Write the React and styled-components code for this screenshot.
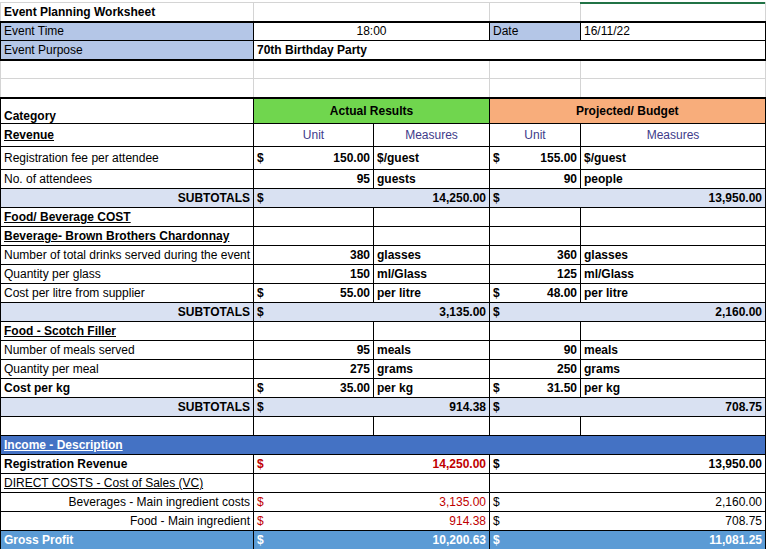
import React from "react";
import styled, { createGlobalStyle } from "styled-components";

const Global = createGlobalStyle`
  html, body { margin: 0; background: #fff; }
  body { font-family: "Liberation Sans", Arial, sans-serif; }
`;

const Sheet = styled.table`
  border-collapse: collapse;
  table-layout: fixed;
  width: 765px;
  font-size: 12px;
  color: #000;
  margin-top: 2px;
`;

const Row = styled.tr`
  height: ${(p) => p.$h || 19}px;
  background: ${(p) => p.$bg || "transparent"};
  color: ${(p) => p.$color || "inherit"};
`;

const Cell = styled.td`
  padding: 0 3px;
  white-space: nowrap;
  overflow: hidden;
  text-align: ${(p) => p.$align || "left"};
  font-weight: ${(p) => (p.$bold ? 700 : 400)};
  text-decoration: ${(p) => (p.$u ? "underline" : "none")};
  background: ${(p) => p.$bg || "transparent"};
  color: ${(p) => p.$color || "inherit"};
  border: 1px solid ${(p) => (p.$grid ? "#d4d4d4" : "#000")};
  border-top-width: ${(p) => (p.$thickTop ? 2 : 1)}px;
  border-bottom-width: ${(p) => (p.$thickBottom ? 2 : 1)}px;
  border-right-width: ${(p) => (p.$thickRight ? 2 : 1)}px;
  max-width: 0;
`;

const Money = styled.div`
  display: flex;
  justify-content: space-between;
  font-weight: ${(p) => (p.$bold ? 700 : 400)};
  color: ${(p) => p.$color || "inherit"};
`;

const SelectBar = styled.div`
  position: absolute;
  left: 580px;
  top: 0;
  width: 185px;
  height: 2px;
  background: #217346;
`;

const HEAD = "#403b8a";
const RED = "#c00000";

const M = ({ v, bold, color }) => (
  <Money $bold={bold} $color={color}>
    <span>$</span>
    <span>{v}</span>
  </Money>
);

const DataRow = ({ label, bold, a, am, b, bm, money }) => (
  <Row>
    <Cell $bold={bold}>{label}</Cell>
    <Cell $align="right" $bold>{money ? <M v={a} bold /> : a}</Cell>
    <Cell $bold>{am}</Cell>
    <Cell $align="right" $bold>{money ? <M v={b} bold /> : b}</Cell>
    <Cell $bold>{bm}</Cell>
  </Row>
);

const Subtotal = ({ a, b }) => (
  <Row $bg="#d9e1f2">
    <Cell $align="right" $bold>SUBTOTALS</Cell>
    <Cell colSpan={2}><M v={a} bold /></Cell>
    <Cell colSpan={2}><M v={b} bold /></Cell>
  </Row>
);

const Section = ({ label }) => (
  <Row>
    <Cell $bold $u>{label}</Cell>
    <Cell /><Cell /><Cell /><Cell />
  </Row>
);

export default function App() {
  return (
    <div style={{ position: "relative" }}>
      <Global />
      <SelectBar />
      <Sheet>
        <colgroup>
          <col style={{ width: 253 }} />
          <col style={{ width: 120 }} />
          <col style={{ width: 116 }} />
          <col style={{ width: 91 }} />
          <col style={{ width: 185 }} />
        </colgroup>
        <tbody>
          <Row>
            <Cell $grid $bold>Event Planning Worksheet</Cell>
            <Cell $grid colSpan={2} /><Cell $grid /><Cell $grid />
          </Row>
          <Row>
            <Cell $bg="#b4c6e7" $thickTop>Event Time</Cell>
            <Cell colSpan={2} $align="center" $thickTop>18:00</Cell>
            <Cell $bg="#b4c6e7" $thickTop>Date</Cell>
            <Cell $thickTop $thickRight>16/11/22</Cell>
          </Row>
          <Row>
            <Cell $bg="#b4c6e7" $thickBottom>Event Purpose</Cell>
            <Cell colSpan={4} $bold $thickBottom $thickRight>70th Birthday Party</Cell>
          </Row>
          <Row><Cell $grid /><Cell $grid colSpan={2} /><Cell $grid /><Cell $grid /></Row>
          <Row><Cell $grid /><Cell $grid colSpan={2} /><Cell $grid /><Cell $grid /></Row>
          <Row $h={26}>
            <Cell $bold $thickTop style={{ verticalAlign: "bottom" }}>Category</Cell>
            <Cell colSpan={2} $bold $align="center" $bg="#70d64e" $thickTop>Actual Results</Cell>
            <Cell colSpan={2} $bold $align="center" $bg="#f8ad7b" $thickTop $thickRight>Projected/ Budget</Cell>
          </Row>
          <Row $h={23}>
            <Cell $bold $u>Revenue</Cell>
            <Cell $align="center" $color={HEAD}>Unit</Cell>
            <Cell $align="center" $color={HEAD}>Measures</Cell>
            <Cell $align="center" $color={HEAD}>Unit</Cell>
            <Cell $align="center" $color={HEAD}>Measures</Cell>
          </Row>
          <Row $h={23}>
            <Cell>Registration fee per attendee</Cell>
            <Cell><M v="150.00" bold /></Cell>
            <Cell $bold>$/guest</Cell>
            <Cell><M v="155.00" bold /></Cell>
            <Cell $bold>$/guest</Cell>
          </Row>
          <DataRow label="No. of attendees" a="95" am="guests" b="90" bm="people" />
          <Subtotal a="14,250.00" b="13,950.00" />
          <Section label="Food/ Beverage COST" />
          <Section label="Beverage- Brown Brothers Chardonnay" />
          <DataRow label="Number of total drinks served during the event" a="380" am="glasses" b="360" bm="glasses" />
          <DataRow label="Quantity per glass" a="150" am="ml/Glass" b="125" bm="ml/Glass" />
          <DataRow label="Cost per litre from supplier" money a="55.00" am="per litre" b="48.00" bm="per litre" />
          <Subtotal a="3,135.00" b="2,160.00" />
          <Section label="Food - Scotch Filler" />
          <DataRow label="Number of meals served" a="95" am="meals" b="90" bm="meals" />
          <DataRow label="Quantity per meal" a="275" am="grams" b="250" bm="grams" />
          <DataRow label="Cost per kg" bold money a="35.00" am="per kg" b="31.50" bm="per kg" />
          <Subtotal a="914.38" b="708.75" />
          <Row><Cell /><Cell /><Cell /><Cell /><Cell /></Row>
          <Row $bg="#4472c4" $color="#fff">
            <Cell colSpan={5} $bold $u>Income - Description</Cell>
          </Row>
          <Row>
            <Cell $bold>Registration Revenue</Cell>
            <Cell colSpan={2}><M v="14,250.00" bold color={RED} /></Cell>
            <Cell colSpan={2}><M v="13,950.00" bold /></Cell>
          </Row>
          <Row>
            <Cell $u>DIRECT COSTS - Cost of Sales (VC)</Cell>
            <Cell colSpan={2} /><Cell colSpan={2} />
          </Row>
          <Row>
            <Cell $align="right">Beverages - Main ingredient costs</Cell>
            <Cell colSpan={2}><M v="3,135.00" color={RED} /></Cell>
            <Cell colSpan={2}><M v="2,160.00" /></Cell>
          </Row>
          <Row>
            <Cell $align="right">Food - Main ingredient</Cell>
            <Cell colSpan={2}><M v="914.38" color={RED} /></Cell>
            <Cell colSpan={2}><M v="708.75" /></Cell>
          </Row>
          <Row $bg="#5b9bd5" $color="#fff">
            <Cell $bold>Gross Profit</Cell>
            <Cell colSpan={2}><M v="10,200.63" bold /></Cell>
            <Cell colSpan={2}><M v="11,081.25" bold /></Cell>
          </Row>
        </tbody>
      </Sheet>
    </div>
  );
}
